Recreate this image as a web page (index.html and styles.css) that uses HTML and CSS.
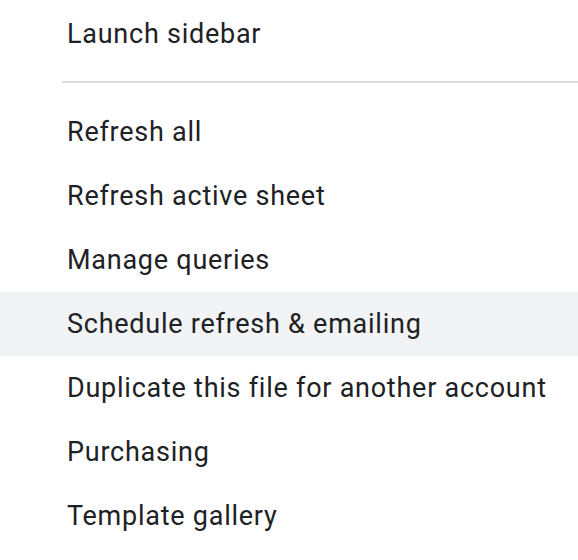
FILE: index.html
```html
<!DOCTYPE html>
<html lang="en">
<head>
    <meta charset="UTF-8">
    <meta name="viewport" content="width=device-width, initial-scale=1.0">
    <title>Add-on menu</title>
    <link rel="stylesheet" href="styles.css">
</head>
<body>

    <ul class="menu">
        <li class="item">Launch sidebar</li>
        <li class="separator"></li>
        <li class="item">Refresh all</li>
        <li class="item">Refresh active sheet</li>
        <li class="item">Manage queries</li>
        <li class="item hover">Schedule refresh &amp; emailing</li>
        <li class="item">Duplicate this file for another account</li>
        <li class="item">Purchasing</li>
        <li class="item">Template gallery</li>
    </ul>

</body>
</html>
```

FILE: styles.css
```css
body {
    margin: 0;
    background: #fff;
    font-family: Roboto, "Liberation Sans", Arial, sans-serif;
    color: #202124;
}
.menu {
    list-style: none;
    margin: 0;
    padding: 2px 0 0;
}
.item {
    height: 64px;
    line-height: 64px;
    padding-left: 67px;
    font-size: 27px;
    letter-spacing: 0.75px;
    white-space: nowrap;
}
.item.hover {
    background: #f1f3f4;
}
.separator {
    height: 2px;
    margin: 15px 0 17px 62px;
    background: #dadce0;
}
```
